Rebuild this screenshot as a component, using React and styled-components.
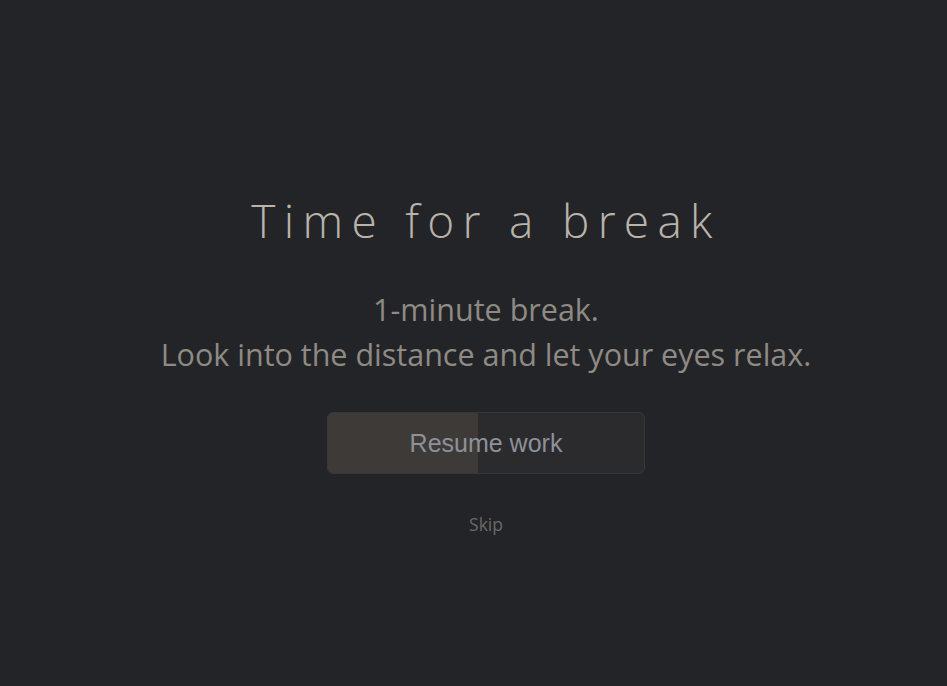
import React from "react";
import styled, { createGlobalStyle } from "styled-components";

const GlobalStyle = createGlobalStyle`
  html, body {
    margin: 0;
    height: 100%;
    background: #232428;
  }
  #root {
    height: 100%;
  }
`;

const Screen = styled("div")`
  height: 100vh;
  display: flex;
  flex-direction: column;
  align-items: center;
  padding: 190px 0 0 25px;
  box-sizing: border-box;
  font-family: "Open Sans", "Noto Sans", sans-serif;
`;

const Title = styled("h1")`
  margin: 0;
  font-size: 46px;
  font-weight: 300;
  letter-spacing: 8.3px;
  line-height: 60px;
  color: #b9b3a9;
`;

const Message = styled("p")`
  margin: 37px 0 0;
  font-size: 30.5px;
  line-height: 45px;
  color: #8f8a84;
  text-align: center;
`;

const ResumeButton = styled("button")`
  position: relative;
  overflow: hidden;
  margin-top: 35px;
  width: 318px;
  height: 62px;
  border: 1px solid #38383b;
  border-radius: 6px;
  background: #2b2b2d;
  font-family: "Liberation Sans", Arial, sans-serif;
  font-size: 25px;
  color: #8d9199;
  cursor: pointer;
`;

const Progress = styled("span")`
  position: absolute;
  left: 0;
  top: 0;
  bottom: 0;
  background: #3e3a37;
`;

const Label = styled("span")`
  position: relative;
`;

const SkipLink = styled("button")`
  margin-top: 38px;
  border: none;
  background: none;
  padding: 0;
  font-family: "Open Sans", "Noto Sans", sans-serif;
  font-size: 17.5px;
  color: #6b6967;
  cursor: pointer;
`;

export default function App() {
  const elapsed = 0.475;
  return (
    <>
      <GlobalStyle />
      <Screen>
        <Title>Time for a break</Title>
        <Message>
          1-minute break.
          <br />
          Look into the distance and let your eyes relax.
        </Message>
        <ResumeButton>
          <Progress style={{ width: `${elapsed * 100}%` }} />
          <Label>Resume work</Label>
        </ResumeButton>
        <SkipLink>Skip</SkipLink>
      </Screen>
    </>
  );
}
